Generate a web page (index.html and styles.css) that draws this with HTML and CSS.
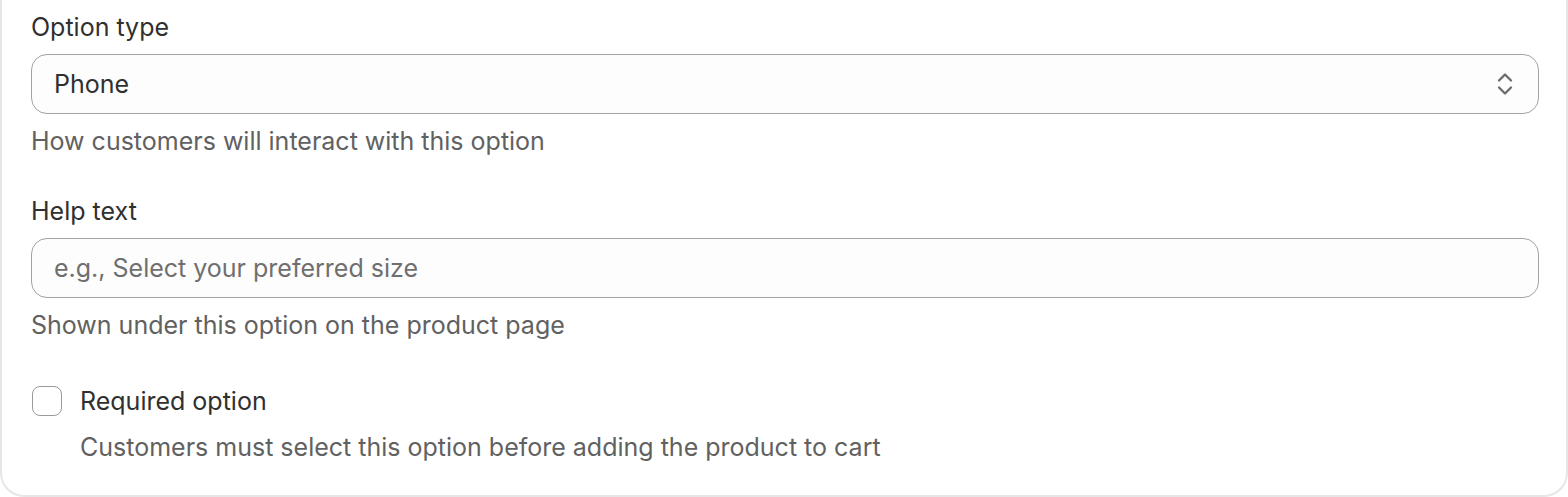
FILE: index.html
```html
<!DOCTYPE html>
<html lang="en">
<head>
    <meta charset="UTF-8">
    <meta name="viewport" content="width=device-width, initial-scale=1.0">
    <title>Option settings</title>
    <link rel="stylesheet" href="styles.css">
</head>
<body>
    <div class="card">
        <div class="field">
            <label class="field-label" for="optionType">Option type</label>
            <div class="select-wrap">
                <select id="optionType" class="select">
                    <option>Phone</option>
                </select>
                <svg class="select-icon" viewBox="0 0 24 32" width="24" height="32" aria-hidden="true">
                    <path d="M6 12.5 12 6.5l6 6M6 19.5l6 6 6-6" fill="none" stroke="currentColor" stroke-width="2.3" stroke-linecap="round" stroke-linejoin="round"/>
                </svg>
            </div>
            <div class="field-help">How customers will interact with this option</div>
        </div>

        <div class="field">
            <label class="field-label" for="helpText">Help text</label>
            <input type="text" id="helpText" class="text-input" placeholder="e.g., Select your preferred size">
            <div class="field-help">Shown under this option on the product page</div>
        </div>

        <div class="check-row">
            <input type="checkbox" id="required" class="checkbox">
            <div class="check-text">
                <label for="required" class="check-label">Required option</label>
                <div class="field-help">Customers must select this option before adding the product to cart</div>
            </div>
        </div>
    </div>
</body>
</html>
```

FILE: styles.css
```css
body {
    font-family: Inter, "Noto Sans", sans-serif;
    background-color: #ffffff;
    margin: 0;
    overflow: hidden;
}
.card {
    background-color: #ffffff;
    border: 2px solid #e6e6e6;
    border-top: none;
    border-radius: 0 0 24px 24px;
    padding: 11px 27px 32px 29px;
    display: flex;
    flex-direction: column;
    gap: 38px;
    color: #303030;
    font-size: 25px;
    line-height: 32px;
}
.field {
    display: flex;
    flex-direction: column;
}
.field-label {
    margin-bottom: 11px;
}
.field-help {
    color: #616161;
    margin-top: 11px;
}
.select-wrap {
    position: relative;
}
.select, .text-input {
    box-sizing: border-box;
    width: 100%;
    height: 60px;
    border: 1.5px solid #a3a3a3;
    border-radius: 16px;
    background-color: #fdfdfd;
    padding: 0 22px;
    font-family: inherit;
    font-size: 25px;
    color: #303030;
    appearance: none;
    outline: none;
}
.text-input::placeholder {
    color: #6f6f6f;
}
.select-icon {
    position: absolute;
    right: 22px;
    top: 14px;
    color: #6b6b6b;
    pointer-events: none;
}
.check-row {
    display: flex;
    gap: 18px;
    margin-top: 6px;
}
.checkbox {
    appearance: none;
    box-sizing: border-box;
    width: 30px;
    height: 30px;
    margin: 1px 0 0 1px;
    border: 1.5px solid #9a9a9a;
    border-radius: 8px;
    background-color: #ffffff;
}
.check-text {
    display: flex;
    flex-direction: column;
}
.check-text .field-help {
    margin-top: 14px;
}
```
